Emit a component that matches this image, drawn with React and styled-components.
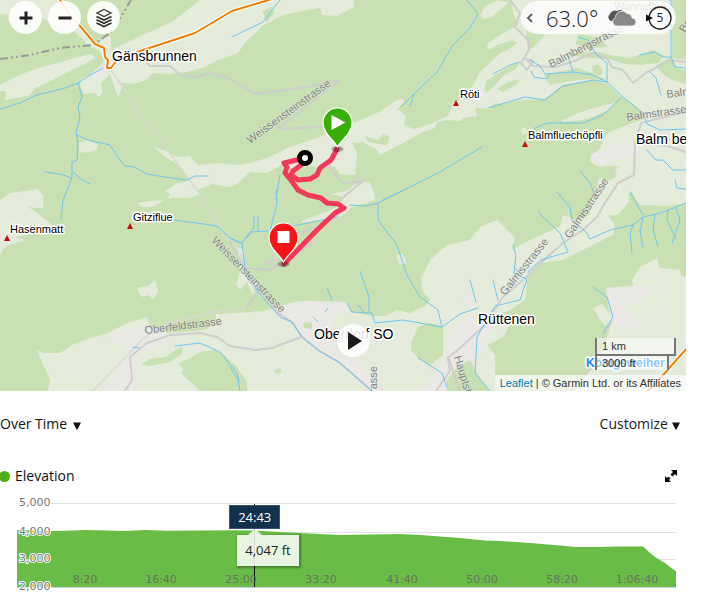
import React from "react";
import styled, { createGlobalStyle } from "styled-components";

const GlobalStyle = createGlobalStyle`
  * { box-sizing: border-box; }
  body {
    margin: 0;
    background: #fff;
    color: #111;
    font-family: "Open Sans", "Noto Sans", sans-serif;
    font-size: 14px;
  }
  button, select { font: inherit; color: inherit; border: 0; padding: 0; background: none; cursor: pointer; }
`;

const Page = styled.main`
  display: flex;
  flex-direction: column;
  overflow-x: hidden;
`;

const MapPanel = styled.section`
  position: relative;
  margin-right: 25px;
  height: 391px;
  overflow: hidden;
  background: #c9e0b2;
`;

const MapDrawing = styled.svg`
  display: block;
  width: 100%;
  height: 100%;
`;

const MapToolbar = styled.div`
  position: absolute;
  inset: 1px 10px auto 9px;
  display: flex;
  justify-content: space-between;
`;

const ButtonGroup = styled.div`
  display: flex;
  gap: 6px;
`;

const RoundButton = styled.button`
  display: grid;
  place-items: center;
  width: 33px;
  height: 33px;
  border-radius: 50%;
  background: rgba(255, 255, 255, 0.88);
`;

const PlayDock = styled.div`
  position: absolute;
  inset: auto 0 34px 21px;
  display: flex;
  justify-content: center;
`;

const WeatherPill = styled.div`
  display: flex;
  align-items: center;
  height: 33px;
  width: 155px;
  padding: 0 4px;
  border-radius: 17px;
  background: rgba(255, 255, 255, 0.8);
`;

const PillButton = styled.button`
  display: grid;
  place-items: center;
  width: 10px;
  height: 20px;
`;

const Temperature = styled.span`
  flex: 1;
  padding-left: 11px;
  font-size: 22px;
  font-weight: 300;
  line-height: 32px;
  color: #222;
`;

const WeatherIcon = styled.svg`
  flex: none;
  margin-right: 9px;
`;

const MapFooter = styled.div`
  position: absolute;
  right: 0;
  bottom: 0;
  display: flex;
  flex-direction: column;
  align-items: flex-end;
  gap: 5px;
  font: 11px/16px "Liberation Sans", Arial, sans-serif;
  color: #333;
`;

const Scale = styled.div`
  margin-right: 10px;
  width: 81px;
`;

const ScaleBar = styled.div`
  width: ${(p) => p.$width}px;
  height: ${(p) => (p.$upper ? 18 : 16)}px;
  margin-top: ${(p) => (p.$upper ? 0 : -2)}px;
  padding-left: 5px;
  line-height: ${(p) => (p.$upper ? 16 : 14)}px;
  background: rgba(255, 255, 255, 0.5);
  border: 2px solid #777;
  border-top-width: ${(p) => (p.$upper ? 0 : 2)}px;
  border-bottom-width: ${(p) => (p.$upper ? 2 : 0)}px;
`;

const Attribution = styled.div`
  padding: 0 5px;
  background: rgba(255, 255, 255, 0.7);
  white-space: nowrap;
`;

const AttributionLink = styled.a`
  color: #0078a8;
  text-decoration: none;
`;

const OptionsBar = styled.div`
  display: flex;
  justify-content: space-between;
  align-items: center;
  padding: 22px 31px 0 0;
  line-height: 22px;
`;

const Picker = styled.label`
  display: flex;
  align-items: center;
  gap: 5px;
`;

const PickerSelect = styled.select`
  appearance: none;
  height: 22px;
`;

const MenuButton = styled.button`
  display: flex;
  align-items: center;
  gap: 4px;
  height: 22px;
  color: #222;
`;

const Arrow = styled.svg`
  margin-top: 3px;
`;

const ChartHeader = styled.header`
  display: flex;
  align-items: center;
  padding: 30px 33px 0 0;
`;

const LegendDot = styled.span`
  width: 11px;
  height: 11px;
  margin-left: -1px;
  border-radius: 50%;
  background: #4caf14;
`;

const ChartTitle = styled.h2`
  flex: 1;
  margin: 0 0 0 5px;
  font-size: 14px;
  font-weight: 400;
  line-height: 22px;
`;

const IconButton = styled.button`
  display: grid;
  place-items: center;
  width: 14px;
  height: 14px;
`;

const ChartBody = styled.div`
  position: relative;
  margin: 8px 35px 0 17px;
`;

const ChartDrawing = styled.svg`
  display: block;
  width: 100%;
  height: auto;
  overflow: visible;
  font: 11px "DejaVu Sans", sans-serif;
`;

const TimeTip = styled.div`
  position: absolute;
  top: 10px;
  left: 36%;
  width: 51px;
  margin-left: -25px;
  background: #12314d;
  border: 1px solid #3a5570;
  color: #fff;
  text-align: center;
  font-size: 13px;
  line-height: 22px;
`;

const ValueTip = styled.div`
  position: absolute;
  top: 40px;
  left: 36%;
  margin-left: -17px;
  padding: 0 8px;
  background: rgba(255, 255, 255, 0.85);
  box-shadow: 1px 1px 2px 1px rgba(0, 0, 0, 0.3);
  font-size: 13px;
  line-height: 31px;
  color: #222;
  white-space: nowrap;
  &::before {
    content: "";
    position: absolute;
    left: 11px;
    bottom: 100%;
    border: solid transparent;
    border-width: 0 7px 6px;
    border-bottom-color: rgba(255, 255, 255, 0.85);
  }
`;

const clearings = [
  "200,0 172,22 145,34 122,45 111,50 111,37 104,36 98,44 84,32 72,14 64,0 0,0 0,15 7,14 9,22 17,24 23,18 39,16 52,24 62,27 75,32 90,46 102,52 104,62 92,74 82,78 80,86 84,94 94,93 99,97 103,92 101,83 110,74 114,86 118,97 122,88 119,82 134,84 146,80 153,73 170,74 186,72 203,68 218,60 230,56 238,53 245,43 253,35 263,25 268,23 283,15 307,10 320,8 322,15 337,16 354,7 354,0",
  "0,85 15,77 30,71 45,66 62,62 78,57 92,54 95,58 85,64 70,71 60,76 45,84 35,88 28,96 5,100 6,91 0,91",
  "79,143 88,140 98,145 96,150 85,153 79,151",
  "153,146 166,151 177,157 190,156 198,165 217,163 235,165 250,163 267,158 290,147 320,137 353,123 377,113 397,100 402,98 404,102 397,109 402,112 406,117 404,125 414,129 430,124 448,116 453,103 468,96 473,85 480,72 493,60 500,53 487,48 488,43 505,32 518,25 513,13 512,0 686,0 686,203 668,206 640,205 636,200 632,192 628,194 629,202 618,215 590,216 590,204 597,190 598,180 609,174 619,167 610,166 600,167 593,164 590,157 600,148 607,133 622,127 640,120 645,113 630,103 621,97 607,84 593,80 562,85 545,99 525,100 494,104 490,109 475,108 477,116 464,118 460,121 447,120 437,122 435,128 423,132 403,143 380,155 377,150 363,142 352,143 357,153 355,175 340,174 334,166 322,168 308,166 295,170 283,164 267,173 250,172 238,183 230,187 212,184 198,190 200,194 190,198 168,198 152,207 141,207 138,203 150,201 166,200 170,194 165,191 177,183 186,182 188,176 178,165 163,155",
  "561,121 576,114 590,109 606,105 617,102 609,110 592,117 583,120 565,122",
  "521,130 524,127 527,130 526,134 522,134",
  "480,15 485,6 497,1 509,2 500,10 492,17 483,19",
  "0,200 10,193 25,191 38,189 43,196 43,208 35,208 27,206 40,215 52,225 40,232 15,237 25,240 15,243 5,247 0,254",
  "137,288 148,286 155,280 158,291 154,299 148,295 142,297 137,290",
  "37,350 43,353 60,353 72,345 90,338 108,333 127,323 147,317 150,327 168,333 205,330 216,323 216,314 240,313 263,311 290,303 300,301 347,302 350,312 373,316 385,316 397,310 410,313 425,306 430,300 422,290 421,278 430,260 447,245 470,240 480,227 497,220 505,228 515,238 512,250 530,240 547,232 560,226 563,215 577,220 593,213 607,214 615,225 613,235 597,243 563,260 541,263 528,273 525,300 510,310 503,313 511,323 503,337 487,345 495,355 495,391 48,391 50,380",
  "606,288 633,286 632,280 640,267 657,258 660,268 680,270 681,276 686,277 686,391 575,391 590,370 605,345 612,320 608,305",
  "593,308 602,304 613,318 608,328 600,320",
  "301,221 328,211 342,204 343,198 365,192 374,192 375,200 350,208 342,216 320,221 303,223",
  "237,247 244,250 245,268 253,276 259,290 252,294 247,282 240,290 236,284 240,272",
  "396,256 402,254 407,263 400,265",
  "330,194 345,191 361,181 370,183 374,192 350,198",
];

const villages = [
  "98,47 111,60 108,70 98,77 87,78 96,69 105,62",
  "108,334 147,325 158,330 168,340 148,348 133,355 134,391 98,391 118,371 130,352 118,345",
  "284,308 300,301 347,302 350,312 335,316 332,326 348,350 384,391 366,391 345,366 318,354 300,336 290,322 277,318",
  "420,391 444,360 444,340 456,330 475,310 462,300 470,290 475,318 490,325 485,345 475,360 470,391",
  "590,161 592,154 605,150 623,141 636,143 634,155 610,160 600,165",
  "606,288 633,286 650,284 646,300 625,304 640,325 618,330 612,318",
];

const woods = [
  "141,365 150,359 166,357 175,350 182,347 182,354 170,362 150,366",
  "178,364 190,358 200,352 214,350 224,355 237,367 247,382 247,391 200,391 181,373 184,369",
  "411,343 418,327 430,323 443,327 443,355 430,365 418,358 411,350",
  "447,380 458,366 470,360 478,375 489,391 447,391",
  "365,136 378,140 383,134 390,137 387,145 378,144 368,142",
  "485,53 497,45 512,40 517,43 508,50 495,55",
  "484,89 487,80 497,74 508,67 520,62 516,69 503,76 494,86 487,93",
  "497,89 508,82 521,79 514,86 503,92",
  "527,28 545,35 537,44 530,50 526,38",
  "544,75 562,71 578,68 592,73 606,80 585,79 565,82 550,85",
  "566,55 580,52 598,52 610,55 630,58 652,50 664,55 658,63 640,65 624,64 610,59 590,58",
  "592,66 598,64 603,70 600,76 593,73",
  "578,34 600,38 608,47 590,48 576,44",
  "655,66 670,58 678,68 686,70 686,84 672,80 664,75",
  "672,0 686,0 686,60 672,58",
  "600,167 608,166 617,172 615,178 605,182 600,176",
  "628,104 635,106 644,118 636,122 626,113",
  "303,323 312,322 312,329 304,328",
  "274,371 280,368 282,372 277,374",
  "262,11 272,7 274,13 266,23 264,15",
];

const waters = [
  "0,109 20,103 37,95 65,88 78,83 87,77 103,68",
  "78,83 82,97 78,107 80,118 76,132 78,143 77,160 72,162 72,177 67,190 63,200 61,219",
  "77,135 88,140 110,145 120,160 125,166 134,167 147,174 165,177 187,180 195,176 208,176",
  "45,172 60,174 72,178", "73,172 81,179 90,184",
  "280,0 263,22 232,37", "467,0 478,14 470,28 453,45 437,72 413,95 401,107", "414,95 410,106",
  "383,200 400,192 440,172 460,160 482,147",
  "280,175 276,200",
  "488,108 525,97 545,100 563,86 593,80 607,82 623,97 643,113 647,124 660,130 686,129",
  "493,74 510,65 520,62", "530,60 540,66 545,74 573,72 593,75 607,82", "531,71 534,77 545,79 550,75",
  "535,128 547,123 583,123 603,115 622,97",
  "578,37 588,40 595,53 607,63 607,82", "671,0 671,57 675,67 686,68", "640,55 655,52 663,57 671,57",
  "650,72 656,78 661,95", "647,150 656,160 663,160 673,170 686,170", "580,171 590,183 593,190 597,200", "567,53 573,72",
  "557,192 570,207 572,220 587,233 590,239 610,230 633,225 643,217 661,213 686,203",
  "539,213 560,233 568,252 541,260 528,272",
  "630,192 643,215", "633,225 630,233 632,252", "643,218 640,231 643,247", "655,215 653,230 658,246", "668,210 667,220 676,239", "676,208 680,220 672,243",
  "513,245 516,255 514,273 527,279 520,300 495,306 477,337 475,373 490,391",
  "493,280 498,300", "470,280 476,302", "593,287 607,297 613,317 603,333", "675,180 677,188 686,189",
  "173,220 197,223 217,226 230,238 240,243",
  "230,238 242,243 250,232 270,231 277,203 276,190", "242,243 245,268 258,292 280,317 292,322 302,337 318,350 340,363 372,391",
  "254,216 254,228 247,238", "258,216 258,232", "270,228 293,226 337,217",
  "404,190 378,203 378,220 397,245 407,275 420,297 438,310 442,327 460,314 478,308",
  "347,303 352,312 372,313 375,323 403,320 442,327", "360,271 369,297 369,312", "327,288 332,300", "358,305 364,312",
  "350,205 365,206 378,203", "418,358 442,373 447,387", "230,367 238,380 240,391", "175,346 200,343 220,352 237,373 239,382",
  "133,347 139,348", "313,317 318,322", "328,308 325,312",
];

const roads = [
  "145,60 150,66 170,66 180,75 195,77 200,76 210,73 228,78 255,94 307,87 340,80 278,129 322,127",
  "330,160 330,168 340,180 345,183 363,181 340,200",
  "230,242 243,265 250,282 263,293 278,313 292,322 302,337 318,350 340,363 372,391",
  "125,391 132,380 130,357 147,343 170,335 200,333 217,337 230,346 255,350 272,348 288,342 302,337",
  "245,268 267,270 283,265", "283,258 265,262 279,266 312,243", "301,233 325,224 347,207",
  "247,307 257,293 253,284", "436,391 450,371 448,358 460,348 485,325 502,298 523,280 547,257 563,243 583,230 597,217 605,203 618,183 634,175 635,143 641,123 665,117 686,112",
  "510,0 520,13 515,27 528,40 529,50 521,63 527,70 533,61 526,59 533,66 555,67 575,61 593,53 607,58 612,67 623,70 633,83 647,72 654,69 668,60 686,62",
  "635,143 667,146 686,152", "611,322 604,335 594,365 570,391", "449,359 460,391",
];

const streets = [
  ["Weissensteinstrasse", 250, 144, -36],
  ["Weissensteinstrasse", 211, 241, 46],
  ["Oberfeldstrasse", 145, 334, -7],
  ["Balmbergstrasse", 551, 68, -27],
  ["Balmstrasse", 627, 121, -8],
  ["Balmbergstrasse", 667, 98, -8],
  ["Galmisstrasse", 505, 296, -51],
  ["Galmisstrasse", 570, 239, -56],
  ["Hauptstrasse", 454, 357, 73],
  ["Oberdorfstrasse", 377, 445, -90],
  ["Wanneflue", 614, 10, 0],
  ["Berg", 685, 33, -60],
];

const towns = [
  ["Gänsbrunnen", 112, 61],
  ["Oberdorf SO", 314, 339],
  ["Rüttenen", 478, 324],
  ["Balm bei Günsberg", 636, 144],
];

const peaks = [
  ["Röti", 460, 98, 456, 103],
  ["Balmfluechöpfli", 528, 139, 525, 144],
  ["Gitziflue", 133, 221, 130, 226],
  ["Hasenmatt", 10, 233, 7, 238],
];

const MapShape = styled.polygon`
  fill: ${(p) => p.$fill};
`;
const Line = styled.polyline`
  fill: none;
  stroke: ${(p) => p.$color};
  stroke-width: ${(p) => p.$width};
  stroke-linejoin: round;
  stroke-linecap: ${(p) => (p.$dash ? "butt" : "round")};
  stroke-dasharray: ${(p) => p.$dash || "none"};
`;
const MapLabel = styled.text`
  font-family: "Liberation Sans", Arial, sans-serif;
  font-size: ${(p) => p.$size}px;
  font-weight: ${(p) => (p.$bold ? 700 : 400)};
  fill: ${(p) => p.$color || "#000"};
  stroke: ${(p) => p.$halo || "#fff"};
  stroke-width: ${(p) => (p.$halo ? 1 : 3)}px;
  stroke-linejoin: round;
  paint-order: stroke;
`;

function Pin({ x, y, color, children }) {
  return (
    <g transform={`translate(${x} ${y})`}>
      <ellipse cx="0" cy="1" rx="6" ry="3" fill="#000" opacity="0.3" />
      <path
        d="M0 -1 C-4 -9 -14.500 -14 -14.500 -25.500 A14.500 14.500 0 0 1 14.500 -25.500 C14.500 -14 4 -9 0 -1Z"
        fill={color}
        stroke="#fff"
        strokeWidth="1.200"
      />
      {children}
    </g>
  );
}

function TerrainMap() {
  const route =
    "337,149 331,160 320,168 317,175 310,179 298,180 291,175 293,171 305,162";
  const route2 =
    "305,158 284,163 287,167 285,173 291,180 298,190 308,195 321,198 327,203 338,204 344,208 335,213 318,229 284,264";
  return (
    <MapDrawing viewBox="0 0 686 391" preserveAspectRatio="xMidYMid slice" role="img" aria-label="Map">
      {clearings.map((p) => <MapShape key={p} points={p} $fill="#e4ebdb" />)}
      {villages.map((p) => <MapShape key={p} points={p} $fill="#e9e8e4" />)}
      {woods.map((p) => <MapShape key={p} points={p} $fill="#c9e0b2" />)}
      <Line points="111,70 140,113 197,190 240,254 247,268" $color="#d8dad2" $width={1.5} />
      <Line points="93,391 145,337 170,323 217,311 247,308" $color="#d8dad2" $width={1.5} />
      {roads.map((p) => <Line key={p} points={p} $color="#cfcdcd" $width={2} />)}
      {waters.map((p) => <Line key={p} points={p} $color="#70c5ef" $width={1} />)}
      <Line points="0,59 30,55 60,48 93,45 110,33 122,15 131,0" $color="#999" $width={2} $dash="8 3 2 3 2 3" />
      {["60,0 72,18 80,26 95,44 104,48 105,57 108,60 107,68 111,68 117,60 140,51 195,33 232,11 272,-1", "688,347 655,384 648,391"].map((p) => (
        <React.Fragment key={p}>
          <Line points={p} $color="#fff" $width={4} />
          <Line points={p} $color="#f07d00" $width={2} />
        </React.Fragment>
      ))}
      {streets.map(([name, x, y, turn]) => (
        <MapLabel key={`${name}${x}`} transform={`translate(${x} ${y}) rotate(${turn})`} $size={11} $color="#828282" $halo="rgba(238,241,232,.6)">
          {name}
        </MapLabel>
      ))}
      {towns.map(([name, x, y]) => <MapLabel key={name} x={x} y={y} $size={14}>{name}</MapLabel>)}
      {peaks.map(([name, x, y, px, py]) => (
        <g key={name}>
          <path d={`M${px} ${py - 3}l3 6h-6z`} fill="#cc0a0a" />
          <MapLabel x={x} y={y} $size={11}>{name}</MapLabel>
        </g>
      ))}
      <MapLabel x="586" y="367" $size={12} $color="#168af5" $bold>Königsweiher</MapLabel>
      <Line points={route} $color="#f3385a" $width={5} />
      <Line points={route2} $color="#f3385a" $width={5} />
      <circle cx="305" cy="158" r="5.500" fill="#fff" stroke="#000" strokeWidth="5" />
      <Pin x={337.5} y={148} color="#38ae06"><path d="M-6 -33v15l14 -7.500z" fill="#fff" /></Pin>
      <Pin x={283.5} y={263} color="#fd1218"><path d="M-6 -32h12v12h-12z" fill="#fff" /></Pin>
    </MapDrawing>
  );
}

function DownArrow() {
  return <Arrow width="8" height="8" viewBox="0 0 8 8" aria-hidden="true"><path d="M0 .5h8l-3.500 7h-1z" fill="#111" /></Arrow>;
}

const times = [["8:20", 68], ["16:40", 144], ["25:00", 224], ["33:20", 304], ["41:40", 385], ["50:00", 465], ["58:20", 545], ["1:06:40", 620]];
const levels = [["5,000", 9], ["4,000", 38], ["3,000", 65], ["2,000", 93]];

const GridLine = styled.line`
  stroke: ${(p) => (p.$base ? "#c4d5df" : "#e2e2e2")};
`;
const TimeLabel = styled.text`
  fill: #667262;
  text-anchor: middle;
`;
const LevelLabel = styled.text`
  fill: #777;
  stroke: #fff;
  stroke-width: 2px;
  paint-order: stroke;
`;

function ElevationChart() {
  return (
    <ChartBody>
      <ChartDrawing viewBox="0 0 659 96" role="img" aria-label="Elevation">
        {levels.map(([name, y]) => <GridLine key={name} x1="0" x2="659" y1={y - 0.5} y2={y - 0.5} />)}
        <path
          d="M0 35L33 36L50 35.700L68 35L90 35.500L108 36L128 35L150 35.800L183 35.500L218 35.200L237 35.500L263 37L293 38.500L323 40L353 39.500L383 39L403 40L423 41.500L443 43L468 45.500L483 46L513 48L543 50.500L558 52L583 52L600 51.500L626 51.500L632 57L638 62L648 68L653 72L659 76V92H0Z"
          fill="#69bc45"
        />
        <GridLine x1="0" x2="659" y1="92.500" y2="92.500" $base />
        <line x1="237.500" x2="237.500" y1="9" y2="92" stroke="#111" />
        {times.map(([t, x]) => <TimeLabel key={t} x={x} y="88">{t}</TimeLabel>)}
        {levels.map(([name, y]) => <LevelLabel key={name} x="2" y={y + 2}>{name}</LevelLabel>)}
      </ChartDrawing>
      <TimeTip>24:43</TimeTip>
      <ValueTip>4,047 ft</ValueTip>
    </ChartBody>
  );
}

export default function App() {
  return (
    <Page>
      <GlobalStyle />
      <MapPanel>
        <TerrainMap />
        <MapToolbar>
          <ButtonGroup>
            <RoundButton aria-label="Zoom in">
              <svg width="14" height="14"><path d="M7 .5v13M.5 7h13" stroke="#222" strokeWidth="3" /></svg>
            </RoundButton>
            <RoundButton aria-label="Zoom out">
              <svg width="14" height="14"><path d="M.5 7h13" stroke="#222" strokeWidth="3" /></svg>
            </RoundButton>
            <RoundButton aria-label="Layers">
              <svg width="18" height="20" viewBox="0 0 18 20" fill="none" stroke="#333" strokeWidth="1.300">
                <path d="M9 1.500L16 5L9 8.500L2 5Z" />
                <path d="M1.500 8.500L9 12L16.500 8.500M1.500 11.800L9 15.300L16.500 11.800M1.500 15L9 18.500L16.500 15" strokeWidth="1.700" />
              </svg>
            </RoundButton>
          </ButtonGroup>
          <WeatherPill>
            <PillButton aria-label="Collapse weather">
              <svg width="8" height="12"><path d="M6 2L2 6L6 10" fill="none" stroke="#666" strokeWidth="2" /></svg>
            </PillButton>
            <Temperature>63.0°</Temperature>
            <WeatherIcon width="29" height="18" viewBox="0 0 29 18" aria-hidden="true">
              <path d="M4 12A4 4 0 0 1 3 5A5 5 0 0 1 10 2A5 5 0 0 1 17 3L15 12Z" fill="#555" />
              <path d="M9 17A4.500 4.500 0 0 1 8.500 8.500A6.500 6.500 0 0 1 20 4.500A5 5 0 0 1 25 9A4 4 0 0 1 25 17Z" fill="#888" stroke="#f4f6f2" strokeWidth=".8" />
            </WeatherIcon>
            <svg width="27" height="24" viewBox="0 0 27 24" role="img" aria-label="Wind">
              <circle cx="15" cy="12" r="11" fill="none" stroke="#222" strokeWidth="1.300" />
              <path d="M1 8.500L8 12L1 15.500Z" fill="#111" />
              <text x="15" y="16" textAnchor="middle" fontSize="12" fill="#222">5</text>
            </svg>
          </WeatherPill>
        </MapToolbar>
        <PlayDock>
          <RoundButton aria-label="Play">
            <svg width="16" height="18"><path d="M2 0v18l14 -9z" fill="#1c1c1c" /></svg>
          </RoundButton>
        </PlayDock>
        <MapFooter>
          <Scale>
            <ScaleBar $width={81} $upper>1 km</ScaleBar>
            <ScaleBar $width={74}>3000 ft</ScaleBar>
          </Scale>
          <Attribution>
            <AttributionLink href="#leaflet">Leaflet</AttributionLink> | © Garmin Ltd. or its Affiliates
          </Attribution>
        </MapFooter>
      </MapPanel>
      <OptionsBar>
        <Picker>
          <PickerSelect aria-label="Over Time"><option>Over Time</option></PickerSelect>
          <DownArrow />
        </Picker>
        <MenuButton aria-haspopup="menu">Customize<DownArrow /></MenuButton>
      </OptionsBar>
      <section>
        <ChartHeader>
          <LegendDot />
          <ChartTitle>Elevation</ChartTitle>
          <IconButton aria-label="Expand chart">
            <svg width="12" height="12" viewBox="0 0 12 12">
              <path d="M6 0h6v6l-2 -2l-2.500 2.500l-2 -2l2.500 -2.500zM0 6l2 2l1.500 -1.500l2 2l-1.500 1.500l2 2h-6z" />
            </svg>
          </IconButton>
        </ChartHeader>
        <ElevationChart />
      </section>
    </Page>
  );
}
